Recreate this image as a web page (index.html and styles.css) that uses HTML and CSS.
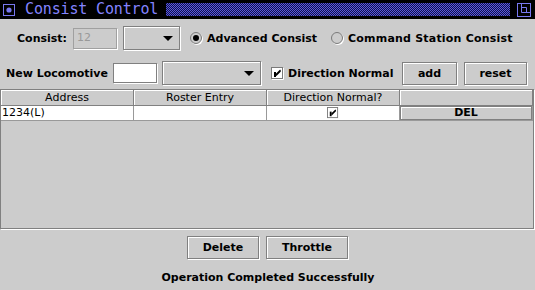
FILE: index.html
```html
<!DOCTYPE html>
<html>
<head>
<meta charset="utf-8">
<title>Consist Control</title>
<link rel="stylesheet" href="styles.css">
</head>
<body>
<div class="window">
  <div class="titlebar">
    <svg class="ticon" viewBox="0 0 12 12" width="12" height="12">
      <rect x="0.5" y="0.5" width="11" height="11" fill="none" stroke="#7878f0" stroke-width="1"/>
      <circle cx="6" cy="6" r="2.6" fill="#7878f0"/>
    </svg>
    <span class="title">Consist Control</span>
    <div class="grip"></div>
    <svg class="ticon2" viewBox="0 0 14 14" width="14" height="14">
      <rect x="0.5" y="0.5" width="13" height="13" fill="none" stroke="#7878f0" stroke-width="1"/>
      <path d="M4.5 1 V9.5 H13 M9.5 4.5 V9.5 M4.5 4.5 H9.5" fill="none" stroke="#7878f0" stroke-width="1"/>
    </svg>
  </div>

  <div class="row row1">
    <span class="lbl lbl-consist">Consist:</span>
    <div class="field disabled">12</div>
    <div class="combo combo-small"><span class="arrow"></span></div>
    <span class="radio on"></span><span class="lbl rlbl">Advanced Consist</span>
    <span class="radio"></span><span class="lbl rlbl">Command Station Consist</span>
  </div>

  <div class="row row2">
    <span class="lbl lbl-loco">New Locomotive</span>
    <div class="field"></div>
    <div class="combo combo-wide"><span class="arrow"></span></div>
    <svg class="check" viewBox="0 0 13 13" width="13" height="13">
      <rect x="0.5" y="0.5" width="11" height="11" fill="#fff" stroke="#7a7a7a"/>
      <path d="M1 12.5 H12.5 V1" fill="none" stroke="#fff"/>
      <rect x="3" y="5" width="2" height="5" fill="#000"/>
      <path d="M9.5 3 L5 7.5 M9.5 4 L5 8.5" stroke="#000" stroke-width="1.2" fill="none"/>
    </svg>
    <span class="lbl clbl">Direction Normal</span>
    <div class="btn btn-add">add</div>
    <div class="btn btn-reset">reset</div>
  </div>

  <div class="scrollpane">
    <div class="thead">
      <div class="th">Address</div>
      <div class="th">Roster Entry</div>
      <div class="th">Direction Normal?</div>
      <div class="th"></div>
    </div>
    <div class="tr">
      <div class="td">1234(L)</div>
      <div class="td"></div>
      <div class="td center">
        <svg class="check-cell" viewBox="0 0 13 13" width="13" height="13">
          <rect x="0.5" y="0.5" width="11" height="11" fill="#fff" stroke="#7a7a7a"/>
          <rect x="3" y="5" width="2" height="5" fill="#000"/>
          <path d="M9.5 3 L5 7.5 M9.5 4 L5 8.5" stroke="#000" stroke-width="1.2" fill="none"/>
        </svg>
      </div>
      <div class="td del-cell"><div class="del">DEL</div></div>
    </div>
  </div>

  <div class="actions">
    <div class="btn btn-delete">Delete</div>
    <div class="btn btn-throttle">Throttle</div>
  </div>

  <div class="status">Operation Completed Successfully</div>
</div>
</body>
</html>
```

FILE: styles.css
```css
html, body {
  margin: 0;
  padding: 0;
}
body {
  width: 535px;
  height: 290px;
  overflow: hidden;
  background: #cccccc;
  font-family: "DejaVu Sans", sans-serif;
  font-size: 11px;
  color: #000;
}
.window {
  display: flex;
  flex-direction: column;
}

/* title bar */
.titlebar {
  height: 19px;
  background: #000;
  display: flex;
  align-items: center;
}
.ticon {
  margin-left: 3px;
  flex: none;
}
.title {
  margin-left: 10px;
  font-family: "DejaVu Sans Mono", monospace;
  font-size: 15px;
  letter-spacing: -0.15px;
  color: #8484ff;
  line-height: 19px;
  white-space: nowrap;
}
.grip {
  flex: 1;
  height: 13px;
  margin: 0 7px 0 8px;
  background: repeating-conic-gradient(#5656dc 0 25%, #12124a 0 50%) 0 0 / 2px 2px;
}
.ticon2 {
  margin-right: 4px;
  flex: none;
}

/* form rows */
.row {
  display: flex;
  align-items: center;
  height: 24px;
}
.row1 {
  margin-top: 7px;
  padding-left: 17px;
}
.row2 {
  margin-top: 11px;
  padding-left: 6px;
}
.lbl {
  font-weight: bold;
  font-size: 11px;
  white-space: nowrap;
}
.lbl-consist {
  width: 50px;
}
.lbl-loco {
  width: 102px;
}
.field {
  flex: none;
  width: 42px;
  height: 18px;
  background: #fff;
  border: 1px solid #808080;
  box-shadow: 1px 1px 0 #fff;
  font-size: 11px;
  line-height: 18px;
  text-indent: 3px;
}
.row1 .field {
  margin-left: 6px;
  height: 19px;
}
.row2 .field {
  margin-left: 5px;
}
.field.disabled {
  background: #cccccc;
  border-color: #a0a0a0;
  color: #999;
}
.combo {
  flex: none;
  position: relative;
  height: 22px;
  background: #cccccc;
  border: 1px solid #808080;
  box-shadow: inset 1px 1px 0 #fff, 1px 1px 0 #fff;
}
.combo-small {
  width: 55px;
  margin-left: 6px;
}
.combo-wide {
  width: 97px;
  margin-left: 5px;
}
.arrow {
  position: absolute;
  right: 6px;
  top: 9px;
  width: 0;
  height: 0;
  border-left: 5px solid transparent;
  border-right: 5px solid transparent;
  border-top: 5px solid #000;
}
.radio {
  flex: none;
  width: 10px;
  height: 10px;
  border: 1px solid #7a7a7a;
  border-radius: 50%;
  background: #cccccc;
  box-shadow: 1px 1px 0 #fff;
  position: relative;
}
.radio.on::after {
  content: "";
  position: absolute;
  left: 2px;
  top: 2px;
  width: 6px;
  height: 6px;
  border-radius: 50%;
  background: #000;
}
.row1 .radio {
  margin-left: 10px;
}
.row1 .radio + .rlbl {
  margin-left: 5px;
}
.row1 .rlbl + .radio {
  margin-left: 14px;
}
.row1 .rlbl:last-child {
  letter-spacing: 0.2px;
}
.check {
  flex: none;
  margin-left: 10px;
}
.clbl {
  margin-left: 4px;
  width: 104px;
}
.btn {
  flex: none;
  height: 21px;
  line-height: 21px;
  border: 1px solid #808080;
  box-shadow: inset 1px 1px 0 #fff, 1px 1px 0 #fff;
  background: #cccccc;
  font-weight: bold;
  font-size: 11px;
  text-align: center;
  white-space: nowrap;
}
.btn-add {
  width: 53px;
  margin-left: 10px;
}
.btn-reset {
  width: 61px;
  margin-left: 7px;
}

/* table */
.scrollpane {
  margin-top: 4px;
  width: 532px;
  height: 138px;
  border: 1px solid #808080;
  box-shadow: 1px 1px 0 #fff;
  background: #cccccc;
}
.thead, .tr {
  display: grid;
  grid-template-columns: 133px 133px 133px 133px;
}
.th {
  height: 15px;
  line-height: 15px;
  border-right: 1px solid #808080;
  border-bottom: 1px solid #808080;
  box-shadow: inset 1px 1px 0 #fff;
  text-align: center;
  font-size: 11px;
  white-space: nowrap;
  overflow: hidden;
}
.td {
  height: 14px;
  line-height: 14px;
  background: #fff;
  border-right: 1px solid #999;
  border-bottom: 1px solid #999;
  font-size: 11px;
  padding-left: 1px;
  white-space: nowrap;
  overflow: hidden;
}
.td.center {
  display: flex;
  justify-content: center;
  align-items: center;
  padding-left: 0;
}
.check-cell {
  display: block;
  width: 12px;
  height: 12px;
}
.td.del-cell {
  background: #cccccc;
  padding: 0;
}
.del {
  height: 12px;
  line-height: 12px;
  border: 1px solid #808080;
  box-shadow: inset 1px 1px 0 #fff;
  font-weight: bold;
  font-size: 11px;
  text-align: center;
}

/* bottom */
.actions {
  display: flex;
  justify-content: center;
  gap: 7px;
  margin-top: 7px;
}
.btn-delete {
  width: 70px;
}
.btn-throttle {
  width: 80px;
}
.status {
  margin-top: 12px;
  text-align: center;
  font-weight: bold;
  font-size: 11px;
  line-height: 14px;
  padding-left: 1px;
}
```
